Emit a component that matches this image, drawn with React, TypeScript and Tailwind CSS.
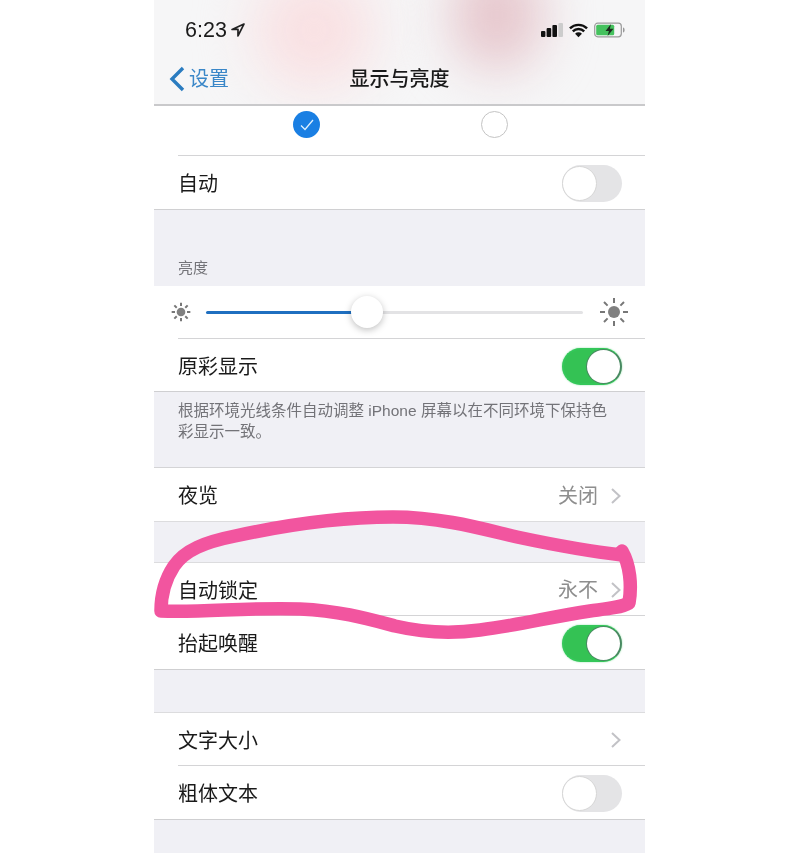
import React from "react";

const font = { fontFamily: '"Liberation Sans","Noto Sans CJK SC",sans-serif' };

function Toggle({ on }: { on: boolean }) {
  return on ? (
    <div className="flex h-[37px] w-[60px] items-center justify-end rounded-full border-2 border-[#34c759] border-r-[#4a8a62] bg-[#34c254] shadow-[0_0_2px_#8fe0a6]">
      <div className="h-[33px] w-[33px] rounded-full bg-white shadow-[0_0_0_1px_#4a8a62]" />
    </div>
  ) : (
    <div className="flex h-[37px] w-[60px] items-center rounded-full bg-[#e4e4e6]">
      <div className="h-[35px] w-[35px] rounded-full border border-[#d6d6d6] bg-white" />
    </div>
  );
}

function Chevron() {
  return (
    <svg width="12" height="18" viewBox="0 0 12 18" fill="none" stroke="#c2c2c6" strokeWidth="2">
      <path d="M2 2l7.5 7L2 16" />
    </svg>
  );
}

function Row({ label, children, last, short }: { label: string; children?: React.ReactNode; last?: boolean; short?: boolean }) {
  return (
    <div className="bg-white pl-6">
      <div className={`flex items-center justify-between pr-[23px] pt-[2px] text-[20px] text-[#1a1a1a] ${short ? "h-[52px]" : "h-[53px]"} ${last ? "" : "border-b border-[#d4d4d6]"}`}>
        <span className="pt-[1px]">{label}</span>
        {children}
      </div>
    </div>
  );
}

function Value({ text }: { text: string }) {
  return (
    <div className="flex items-center gap-[12px] text-[20px] text-[#8e8e8e]">
      <span>{text}</span>
      <Chevron />
    </div>
  );
}

function Sun({ big }: { big?: boolean }) {
  const s = big ? 30 : 20;
  return (
    <svg width={s} height={s} viewBox="0 0 30 30" stroke="#777" strokeWidth={big ? 2 : 3} fill="#808080">
      <circle cx="15" cy="15" r={big ? 6 : 6.5} stroke="none" />
      <path
        fill="none"
        d="M15 1v5M15 24v5M1 15h5M24 15h5M5 5l3.6 3.6M21.4 21.4L25 25M5 25l3.6-3.6M21.4 8.6L25 5"
      />
    </svg>
  );
}

export default function App() {
  return (
    <div className="relative flex h-[853px] w-[800px] justify-center overflow-hidden bg-white" style={font}>
      <div className="relative ml-[-1px] h-[853px] w-[491px] overflow-hidden bg-[#f0f0f5] blur-[0.4px]">
        {/* Nav */}
        <div className="relative h-[106px] overflow-hidden border-b-2 border-[#c9c9cb] bg-[#f6f6f7]">
          <div className="absolute left-[100px] top-[-30px] h-[120px] w-[120px] rounded-full bg-[#f9e0e2] blur-[28px]" />
          <div className="absolute left-[298px] top-[-40px] h-[110px] w-[90px] rounded-full bg-[#e6c6cc] blur-[26px]" />
          <div className="relative flex h-[59px] items-end justify-between pb-[18px] pl-[31px] pr-[20px]">
            <div className="flex items-center gap-[4px] text-[21.5px] font-medium leading-none text-[#1a1a1a]">
              <span>6:23</span>
              <svg width="14" height="14" viewBox="0 0 13 13" fill="none" stroke="#222" strokeWidth="1.6">
                <path d="M12 1L1 6h5.5V12z" strokeLinejoin="round" />
              </svg>
            </div>
            <div className="flex items-center gap-[6px] pb-[3px]">
              <svg width="22" height="14" viewBox="0 0 22 14">
                <rect x="0" y="8" width="4.4" height="6" rx="1" fill="#111" />
                <rect x="5.6" y="5" width="4.6" height="9" rx="1" fill="#111" />
                <rect x="11.4" y="2" width="4.6" height="12" rx="1" fill="#111" />
                <rect x="17.4" y="0" width="4.6" height="14" rx="1" fill="#ccc" />
              </svg>
              <svg width="19" height="15" viewBox="0 0 20 15" fill="none" stroke="#111" strokeWidth="2.6">
                <path d="M1 5.2a13 13 0 0 1 18 0M4 8.4a8.6 8.6 0 0 1 12 0" />
                <path d="M10 14.5L6.4 11a5 5 0 0 1 7.2 0z" fill="#111" stroke="none" />
              </svg>
              <svg width="31" height="16" viewBox="0 0 31 15" fill="none">
                <rect x="0.7" y="0.7" width="26.6" height="13.6" rx="3" stroke="#9a9a9a" strokeWidth="1.2" />
                <rect x="2.2" y="2.2" width="18" height="10.6" rx="1.5" fill="#45c25e" />
                <path d="M29 5v5c1 0 1.6-1 1.6-2.5S30 5 29 5z" fill="#999" />
                <path d="M17 1.5L11.5 8.5h3.4L13.6 13.5 19.5 6.2h-3.6z" fill="#1d2b1f" />
              </svg>
            </div>
          </div>
          <div className="relative flex h-[44px] items-center justify-center">
            <div className="absolute left-[15px] top-0 flex h-[44px] items-center gap-[4px] pb-[5px] text-[20px] text-[#3a87c8]">
              <svg width="16" height="26" viewBox="0 0 16 26" fill="none" stroke="#2a7cc0" strokeWidth="3.4">
                <path d="M14 2L3 13l11 11" />
              </svg>
              <span>设置</span>
            </div>
            <span className="pb-[5px] text-[20px] font-medium text-[#1a1a1a]">显示与亮度</span>
          </div>
        </div>

        {/* Appearance selection */}
        <div className="bg-white pl-6">
          <div className="flex h-[50px] items-start border-b border-[#d4d4d6] pt-[5px]">
            <div className="ml-[115px] flex h-[27px] w-[27px] items-center justify-center rounded-full bg-[#1a7fe3]">
              <svg width="16" height="14" viewBox="0 0 16 14" fill="none" stroke="#dff0ff" strokeWidth="1.3">
                <path d="M2 7.5l4 4L14 2" />
              </svg>
            </div>
            <div className="ml-[161px] h-[27px] w-[27px] rounded-full border border-[#c4c4c4] bg-white" />
          </div>
        </div>
        <Row label="自动" last>
          <Toggle on={false} />
        </Row>
        <div className="flex h-[77px] items-end border-t border-[#d0d0d2] pb-[8px] pl-6 text-[15px] leading-[20px] text-[#737378]">
          亮度
        </div>

        {/* Brightness */}
        <div className="bg-white pl-6">
          <div className="flex h-[53px] items-center border-b border-[#d4d4d6] pr-[16px]">
            <div className="ml-[-7px]">
              <Sun />
            </div>
            <div className="ml-[15px] mr-[16px] flex flex-1 items-center">
              <div className="h-[3px] w-[146px] rounded-l-full bg-[#1f6fc0]" />
              <div className="z-10 mx-[-1px] h-[32px] w-[32px] shrink-0 rounded-full bg-white shadow-[0_2px_7px_rgba(0,0,0,0.25)]" />
              <div className="h-[3px] flex-1 rounded-r-full bg-[#e3e3e5]" />
            </div>
            <Sun big />
          </div>
        </div>
        <Row label="原彩显示" last short>
          <Toggle on />
        </Row>
        <div className="h-[76px] border-t border-[#cfcfd1] pl-6 pr-[30px] pt-[8px] text-[15.5px] leading-[21px] text-[#737378]">
          根据环境光线条件自动调整 iPhone 屏幕以在不同环境下保持色彩显示一致。
        </div>

        <div className="border-t border-[#d4d4d6]" />
        <Row label="夜览" last>
          <Value text="关闭" />
        </Row>
        <div className="h-[42px] border-y border-[#dcdcde]" />
        <Row label="自动锁定">
          <Value text="永不" />
        </Row>
        <Row label="抬起唤醒" last>
          <Toggle on />
        </Row>
        <div className="h-[44px] border-y border-t-[#cfcfd1] border-b-[#dcdcde]" />
        <Row label="文字大小">
          <Chevron />
        </Row>
        <Row label="粗体文本" last>
          <Toggle on={false} />
        </Row>
        <div className="border-t border-[#cfcfd1]" />
      </div>

      {/* Hand-drawn highlight */}
      <svg className="absolute left-0 top-0" width="800" height="853" viewBox="0 0 800 853" fill="none">
        <path
          d="M622 555C595 552 550 544 517 537C490 531 445 517 393 517C340 517 290 524 235 536C205 542 185 550 174 566C166 578 161 595 161 611C200 613 250 607 300 609C340 611 365 618 395 626C425 633 450 634 480 630C520 625 550 617 590 611C605 609 620 608 629 603C632 585 630 565 622 551"
          stroke="#f2559f"
          strokeWidth="13.5"
          strokeLinecap="round"
          strokeLinejoin="round"
        />
      </svg>
    </div>
  );
}
